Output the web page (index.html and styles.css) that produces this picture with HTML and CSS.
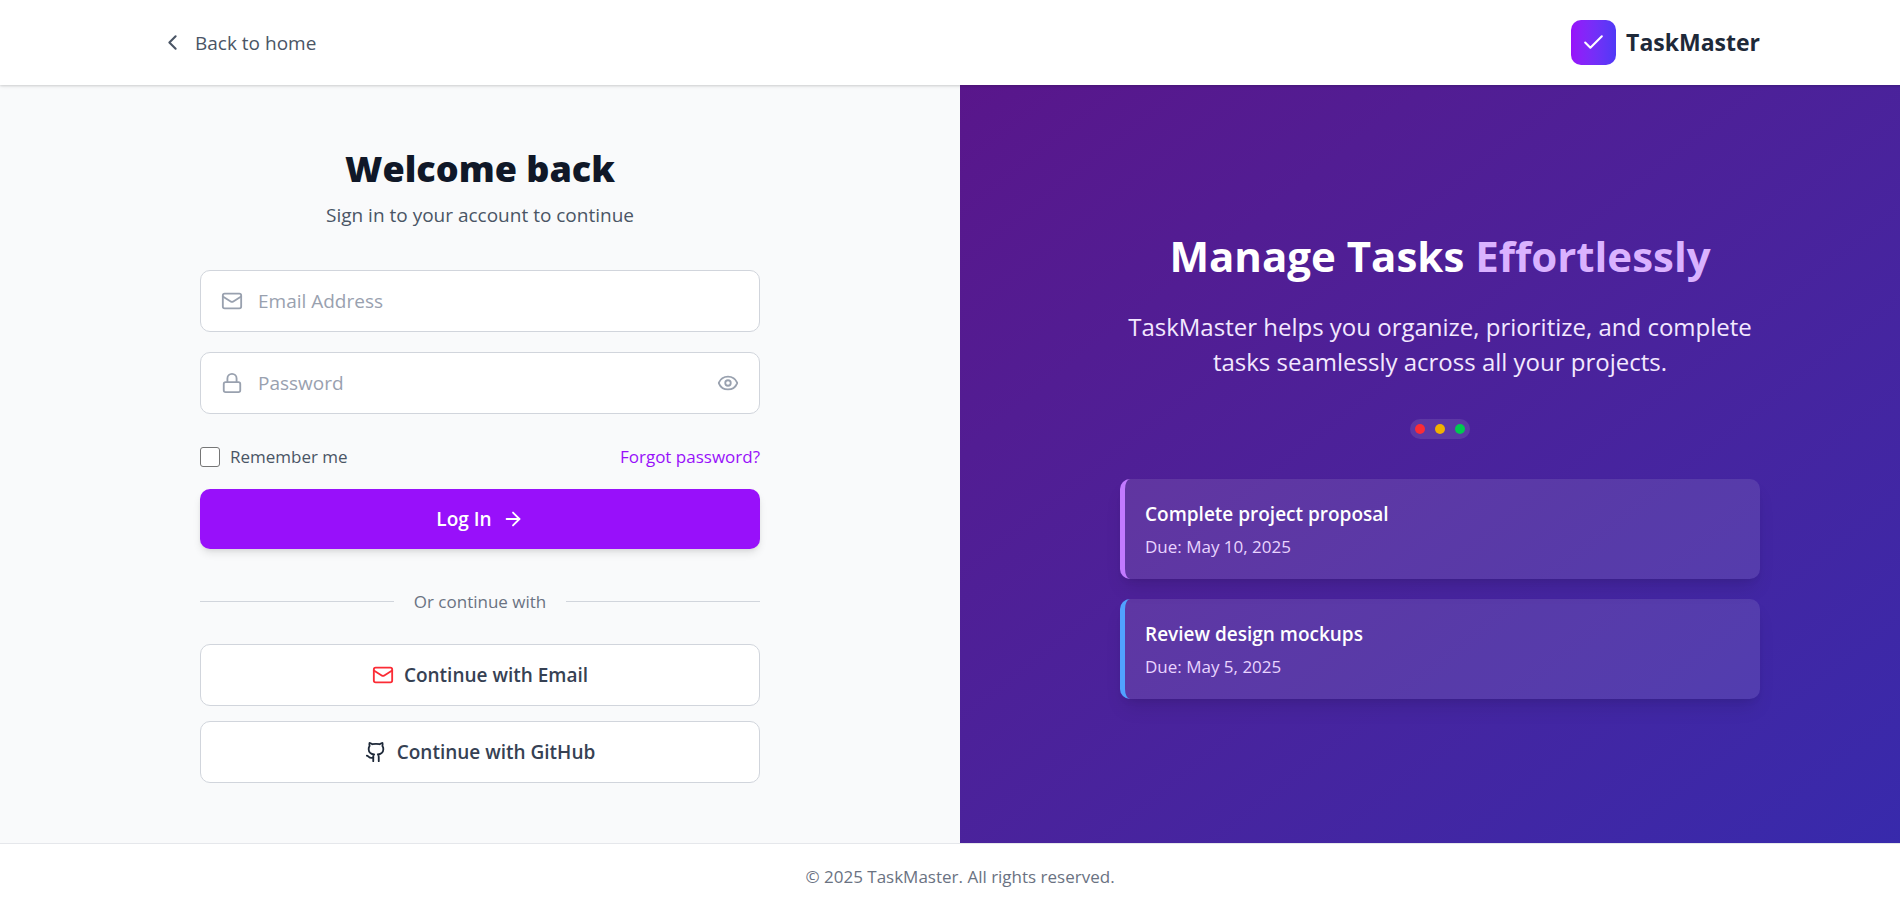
FILE: index.html
```html
<!DOCTYPE html>
<html lang="en">
<head>
<meta charset="utf-8">
<meta name="viewport" content="width=device-width, initial-scale=1">
<title>TaskMaster – Log In</title>
<link rel="stylesheet" href="styles.css">
</head>
<body>
<div class="page">
  <header class="site-header">
    <div class="header-inner">
      <a class="back-link" href="#">
        <svg class="icon icon-large" viewBox="0 0 24 24" aria-hidden="true"><path d="m15 18-6-6 6-6"/></svg>
        <span>Back to home</span>
      </a>
      <a class="brand" href="#">
        <span class="brand-mark"><svg class="icon icon-large" viewBox="0 0 24 24" aria-hidden="true"><path d="M20 6 9 17l-5-5"/></svg></span>
        <span class="brand-name">TaskMaster</span>
      </a>
    </div>
  </header>

  <main class="main">
    <section class="login">
      <div class="login-inner">
        <h1 class="login-title">Welcome back</h1>
        <p class="login-subtitle">Sign in to your account to continue</p>

        <form class="login-form">
          <div class="field">
            <label class="field-icon" for="email" aria-label="Email Address"><svg class="icon" viewBox="0 0 24 24" aria-hidden="true"><path d="m22 7-8.991 5.727a2 2 0 0 1-2.009 0L2 7"/><rect x="2" y="4" width="20" height="16" rx="2"/></svg></label>
            <input class="field-input" id="email" type="email" placeholder="Email Address">
          </div>
          <div class="field">
            <label class="field-icon" for="password" aria-label="Password"><svg class="icon" viewBox="0 0 24 24" aria-hidden="true"><rect x="3" y="11" width="18" height="11" rx="2"/><path d="M7 11V7a5 5 0 0 1 10 0v4"/></svg></label>
            <input class="field-input" id="password" type="password" placeholder="Password">
            <button class="field-toggle" type="button" aria-label="Show password"><svg class="icon" viewBox="0 0 24 24" aria-hidden="true"><path d="M2.062 12.348a1 1 0 0 1 0-.696 10.75 10.75 0 0 1 19.876 0 1 1 0 0 1 0 .696 10.75 10.75 0 0 1-19.876 0"/><circle cx="12" cy="12" r="3"/></svg></button>
          </div>
          <div class="form-options">
            <label class="remember" for="remember"><input class="remember-box" id="remember" type="checkbox">Remember me</label>
            <a class="forgot" href="#">Forgot password?</a>
          </div>
          <button class="submit" type="submit">Log In
            <svg class="icon" viewBox="0 0 24 24" aria-hidden="true"><path d="M5 12h14"/><path d="m12 5 7 7-7 7"/></svg>
          </button>
        </form>

        <div class="divider">Or continue with</div>

        <div class="providers">
          <button class="provider" type="button">
            <svg class="icon icon-email" viewBox="0 0 24 24" aria-hidden="true"><path d="m22 7-8.991 5.727a2 2 0 0 1-2.009 0L2 7"/><rect x="2" y="4" width="20" height="16" rx="2"/></svg>
            Continue with Email
          </button>
          <button class="provider" type="button">
            <svg class="icon icon-github" viewBox="0 0 24 24" aria-hidden="true"><path d="M15 22v-4a4.8 4.8 0 0 0-1-3.5c3 0 6-2 6-5.5.08-1.25-.27-2.48-1-3.5.28-1.15.28-2.35 0-3.5 0 0-1 0-3 1.5-2.64-.5-5.36-.5-8 0C6 2 5 2 5 2c-.3 1.15-.3 2.35 0 3.5A5.403 5.403 0 0 0 4 9c0 3.5 3 5.5 6 5.5-.39.49-.68 1.05-.85 1.65-.17.6-.22 1.23-.15 1.85v4"/><path d="M9 18c-4.51 2-5-2-7-2"/></svg>
            Continue with GitHub
          </button>
        </div>
      </div>
    </section>

    <section class="promo">
      <div class="promo-inner">
        <h2 class="promo-title">Manage Tasks <span class="promo-accent">Effortlessly</span></h2>
        <p class="promo-text">TaskMaster helps you organize, prioritize, and complete tasks seamlessly across all your projects.</p>
        <div class="dots"><span class="dot dot-red"></span><span class="dot dot-yellow"></span><span class="dot dot-green"></span></div>
        <div class="tasks">
          <article class="task task-purple">
            <h3 class="task-title">Complete project proposal</h3>
            <p class="task-due">Due: May 10, 2025</p>
          </article>
          <article class="task task-blue">
            <h3 class="task-title">Review design mockups</h3>
            <p class="task-due">Due: May 5, 2025</p>
          </article>
        </div>
      </div>
    </section>
  </main>

  <footer class="site-footer">© 2025 TaskMaster. All rights reserved.</footer>
</div>
</body>
</html>
```
FILE: styles.css
```css
*, *::before, *::after { box-sizing: border-box; }

html { overflow-x: hidden; }

body {
  margin: 0;
  overflow-x: hidden;
  background: #f9fafb;
  color: #101828;
  font-family: "Segoe UI", "Open Sans", "Noto Sans", sans-serif;
  font-size: 19px;
  line-height: 30px;
}

h1, h2, h3, p { margin: 0; }
a { color: inherit; text-decoration: none; }
button, input { font: inherit; }
button { cursor: pointer; }

.page {
  display: flex;
  flex-direction: column;
  min-height: 100vh;
  margin-right: -20px;
}

.icon {
  flex: none;
  display: block;
  width: 22px;
  height: 22px;
  fill: none;
  stroke: currentColor;
  stroke-width: 2;
  stroke-linecap: round;
  stroke-linejoin: round;
}
.icon-large { width: 25px; height: 25px; }
.icon-email { color: #fb2c36; }
.icon-github { color: #1e2939; }

/* Header */
.site-header {
  position: relative;
  background: #fff;
  box-shadow: 0 1px 4px rgba(0, 0, 0, 0.1), 0 1px 2px rgba(0, 0, 0, 0.1);
}
.header-inner {
  display: flex;
  align-items: center;
  justify-content: space-between;
  max-width: 1600px;
  width: 100%;
  margin: 0 auto;
  padding: 20px 0;
}
.back-link { display: flex; align-items: center; gap: 10px; color: #4a5565; }
.brand { display: flex; align-items: center; gap: 10px; }
.brand-mark {
  display: grid;
  place-items: center;
  width: 45px;
  height: 45px;
  border-radius: 10px;
  background: linear-gradient(to right in oklab, #9810fa, #4f39f6);
  color: #fff;
}
.brand-name { color: #1e2939; font-size: 23px; font-weight: 700; line-height: 35px; }

/* Two halves */
.main { flex: 1; display: grid; grid-template-columns: 1fr 1fr; }

.login { display: flex; align-items: center; justify-content: center; padding: 60px 40px; }
.login-inner { width: 100%; max-width: 560px; }
.login-title { font-size: 36px; font-weight: 800; line-height: 47px; text-align: center; }
.login-subtitle { margin-top: 8px; color: #4a5565; text-align: center; }

.login-form { display: flex; flex-direction: column; gap: 20px; margin-top: 40px; }
.field {
  display: flex;
  align-items: center;
  height: 62px;
  padding: 0 20px;
  border: 1px solid #d1d5dc;
  border-radius: 10px;
  background: #fff;
}
.field-icon { color: #99a1af; }
.field-input {
  flex: 1;
  min-width: 0;
  height: 100%;
  margin-left: 15px;
  padding: 0;
  border: 0;
  outline: 0;
  background: transparent;
  color: #101828;
}
.field-input::placeholder { color: #99a1af; opacity: 1; }
.field-toggle { padding: 0; border: 0; background: none; color: #99a1af; }

.form-options {
  display: flex;
  align-items: center;
  justify-content: space-between;
  margin-top: 10px;
  font-size: 17px;
  line-height: 25px;
}
.remember { display: flex; align-items: center; gap: 10px; color: #4a5565; }
.remember-box {
  appearance: none;
  width: 20px;
  height: 20px;
  margin: 0;
  border: 1px solid #767676;
  border-radius: 3px;
  background: #fff;
}
.remember-box:checked { border-color: #9810fa; background: #9810fa; }
.forgot { color: #9810fa; }

.submit {
  display: flex;
  align-items: center;
  justify-content: center;
  gap: 10px;
  height: 60px;
  border: 0;
  border-radius: 10px;
  background: #9810fa;
  color: #fff;
  font-weight: 600;
  box-shadow: 0 5px 8px -1px rgba(0, 0, 0, 0.1), 0 2px 5px -2px rgba(0, 0, 0, 0.1);
}

.divider {
  display: flex;
  align-items: center;
  gap: 20px;
  margin: 40px 0 30px;
  color: #6a7282;
  font-size: 17px;
  line-height: 25px;
}
.divider::before, .divider::after { content: ""; flex: 1; height: 1px; background: #d1d5dc; }

.providers { display: flex; flex-direction: column; gap: 15px; }
.provider {
  display: flex;
  align-items: center;
  justify-content: center;
  gap: 10px;
  height: 62px;
  border: 1px solid #d1d5dc;
  border-radius: 10px;
  background: #fff;
  color: #364153;
  font-weight: 600;
}

/* Promo panel */
.promo {
  display: flex;
  align-items: center;
  justify-content: center;
  padding: 60px 40px;
  background: linear-gradient(to bottom right in oklab, #59168b, #372aac);
  color: #fff;
}
.promo-inner { width: 100%; max-width: 640px; text-align: center; }
.promo-title { font-size: 42px; font-weight: 700; line-height: 54px; }
.promo-accent { color: #dab2ff; }
.promo-text { margin-top: 26px; color: #f3e8ff; font-size: 24px; line-height: 35px; }

.dots {
  display: flex;
  gap: 10px;
  width: fit-content;
  margin: 40px auto;
  padding: 5px;
  border-radius: 10px;
  background: rgba(255, 255, 255, 0.1);
}
.dot { width: 10px; height: 10px; border-radius: 50%; }
.dot-red { background: #fb2c36; }
.dot-yellow { background: #f0b100; }
.dot-green { background: #00c950; }

.tasks { display: flex; flex-direction: column; gap: 20px; text-align: left; }
.task {
  padding: 20px;
  border-left: 5px solid;
  border-radius: 10px;
  background: rgba(255, 255, 255, 0.1);
  box-shadow: 0 12px 19px -4px rgba(0, 0, 0, 0.1), 0 5px 8px -5px rgba(0, 0, 0, 0.1);
}
.task-purple { border-left-color: #c27aff; }
.task-blue { border-left-color: #51a2ff; }
.task-title { color: #fff; font-size: 19px; font-weight: 600; line-height: 30px; }
.task-due { margin-top: 5px; color: #e9d4ff; font-size: 17px; line-height: 25px; }

/* Footer */
.site-footer {
  padding: 20px;
  border-top: 1px solid #e5e7eb;
  background: #fff;
  color: #6a7282;
  font-size: 17px;
  line-height: 25px;
  text-align: center;
}

@media (max-width: 1680px) {
  .header-inner { padding: 20px 40px; }
}

@media (max-width: 1000px) {
  .main { grid-template-columns: 1fr; }
}
```
